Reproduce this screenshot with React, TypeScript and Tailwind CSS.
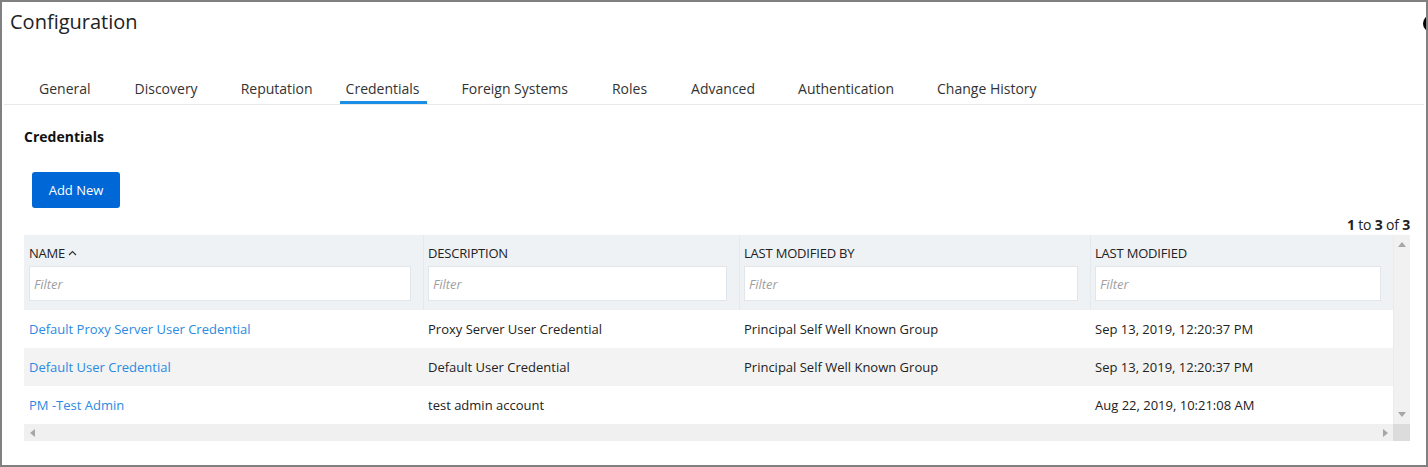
import React from "react";

const tabs: { t: string; ml: string }[] = [
  { t: "General", ml: "" },
  { t: "Discovery", ml: "ml-[44px]" },
  { t: "Reputation", ml: "ml-[43px]" },
  { t: "Credentials", ml: "ml-[27px]" },
  { t: "Foreign Systems", ml: "ml-[42px]" },
  { t: "Roles", ml: "ml-[44px]" },
  { t: "Advanced", ml: "ml-[44px]" },
  { t: "Authentication", ml: "ml-[43px]" },
  { t: "Change History", ml: "ml-[43px]" },
];

const rows = [
  {
    name: "Default Proxy Server User Credential",
    desc: "Proxy Server User Credential",
    by: "Principal Self Well Known Group",
    date: "Sep 13, 2019, 12:20:37 PM",
  },
  {
    name: "Default User Credential",
    desc: "Default User Credential",
    by: "Principal Self Well Known Group",
    date: "Sep 13, 2019, 12:20:37 PM",
  },
  {
    name: "PM -Test Admin",
    desc: "test admin account",
    by: "",
    date: "Aug 22, 2019, 10:21:08 AM",
  },
];

function FilterBox() {
  return (
    <div className="mt-[4px] h-[35px] bg-white border border-[#e1e6ea] flex items-center pl-[4px] pt-[2px] text-[13px] italic text-[#a0a0a0]">
      Filter
    </div>
  );
}

export default function App() {
  return (
    <div
      className="relative w-[1428px] h-[467px] border-2 border-[#808080] bg-white overflow-hidden text-[#222]"
      style={{ fontFamily: '"Open Sans", "Noto Sans", sans-serif' }}
    >
      <div className="absolute left-[1421px] top-[13px] w-[17px] h-[17px] rounded-full bg-black" />

      <div className="pl-[8px] pt-[6px] h-[76px]">
        <div className="text-[20px] leading-[28px] text-[#222]">Configuration</div>
      </div>

      <div className="mx-[2px] flex border-b border-[#e8e8e8] pl-[35px] text-[14px] text-[#333]">
        {tabs.map(({ t, ml }) => {
          const active = t === "Credentials";
          return (
            <div
              key={t}
              className={
                "leading-[20px] pt-[1px] pb-[2px] border-b-[3px] " +
                ml +
                (active
                  ? " border-[#1b8fe6] pl-[6px] pr-[7px] mr-[-7px]"
                  : " border-transparent")
              }
            >
              {t}
            </div>
          );
        })}
      </div>

      <div className="pl-[22px] pr-[16px] pt-[22px]">
        <div className="text-[14px] leading-[20px] font-bold text-[#111]">Credentials</div>
        <div className="mt-[25px] ml-[8px] w-[88px] h-[36px] rounded-[3px] bg-[#0067d6] text-white text-[13px] flex items-center justify-center pt-[1px]">
          Add New
        </div>
        <div className="mt-[7px] text-right text-[14px] leading-[20px] text-[#222] tracking-[-0.2px]">
          <span className="font-bold">1</span> to <span className="font-bold">3</span> of{" "}
          <span className="font-bold">3</span>
        </div>

        <div className="flex flex-col">
          <div className="flex">
            <div className="w-[1369px]">
              {/* header */}
              <div className="grid grid-cols-[399px_316px_351px_303px] bg-[#eef2f5]">
                {["NAME", "DESCRIPTION", "LAST MODIFIED BY", "LAST MODIFIED"].map((h, i) => (
                  <div
                    key={h}
                    className={
                      "pr-[12px] pt-[9px] pb-[9px] " +
                      (i > 0 ? "pl-[4px] border-l border-[#e4e9ed]" : "pl-[5px]")
                    }
                  >
                    <div className="text-[13px] leading-[18px] text-[#222] flex items-center tracking-[-0.2px]">
                      {h}
                      {i === 0 && (
                        <svg width="9" height="6" viewBox="0 0 9 6" className="ml-[3px]">
                          <path d="M1 5 L4.5 1.5 L8 5" fill="none" stroke="#333" strokeWidth="1.2" />
                        </svg>
                      )}
                    </div>
                    <FilterBox />
                  </div>
                ))}
              </div>
              {/* rows */}
              {rows.map((r, i) => (
                <div
                  key={r.name}
                  className={
                    "grid grid-cols-[399px_316px_351px_303px] h-[38px] text-[13px] pt-[2px] " +
                    (i === 1 ? "bg-[#f3f3f3]" : "bg-white")
                  }
                >
                  <div className="pl-[5px] flex items-center text-[#2b8ae2]">{r.name}</div>
                  <div className="pl-[5px] flex items-center text-[#222]">{r.desc}</div>
                  <div className="pl-[5px] flex items-center text-[#222]">{r.by}</div>
                  <div className="pl-[5px] flex items-center text-[#222]">{r.date}</div>
                </div>
              ))}
            </div>
            {/* vertical scrollbar */}
            <div className="w-[17px] bg-[#f1f1f1] border-l border-[#e8ecef] flex flex-col items-center justify-between pt-[7px] pb-[7px]">
              <svg width="8" height="5" viewBox="0 0 8 5">
                <path d="M0 5 L4 0 L8 5 Z" fill="#a6a6a6" />
              </svg>
              <svg width="8" height="5" viewBox="0 0 8 5">
                <path d="M0 0 L8 0 L4 5 Z" fill="#a6a6a6" />
              </svg>
            </div>
          </div>
          {/* horizontal scrollbar */}
          <div className="flex h-[17px]">
            <div className="w-[1369px] bg-[#f0f0f0] flex items-center justify-between pl-[6px] pr-[5px]">
              <svg width="5" height="8" viewBox="0 0 5 8">
                <path d="M5 0 L0 4 L5 8 Z" fill="#a6a6a6" />
              </svg>
              <svg width="5" height="8" viewBox="0 0 5 8">
                <path d="M0 0 L5 4 L0 8 Z" fill="#a6a6a6" />
              </svg>
            </div>
            <div className="w-[17px] bg-[#dcdcdc]" />
          </div>
        </div>
      </div>
    </div>
  );
}
